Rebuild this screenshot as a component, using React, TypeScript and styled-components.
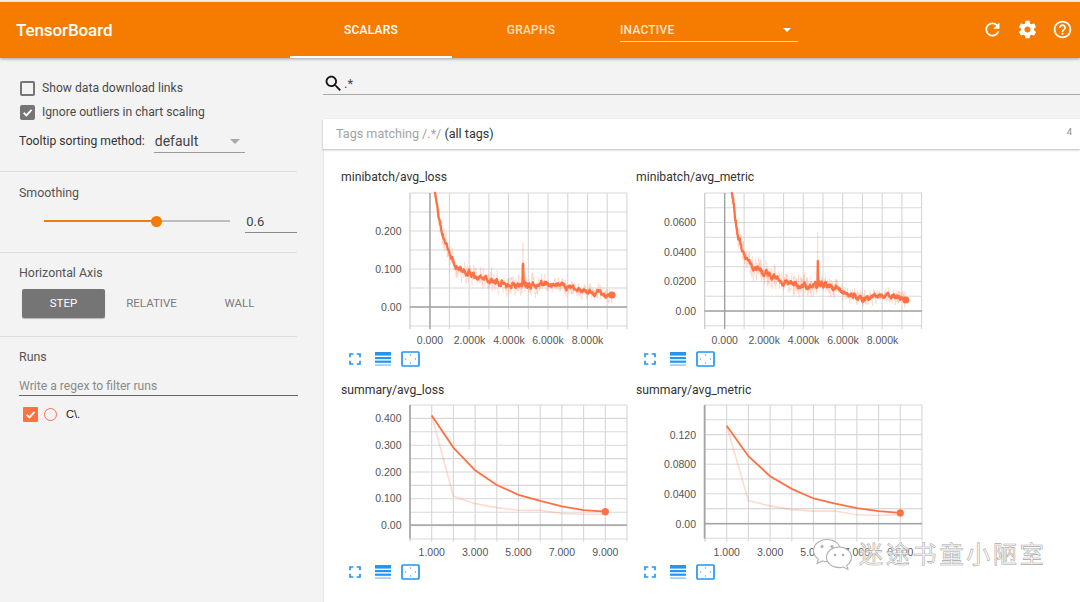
import React from 'react';
import styled, { createGlobalStyle } from 'styled-components';

const Global = createGlobalStyle`
  html, body { margin: 0; padding: 0; background: #f3f3f3; overflow: hidden; }
  body { font-family: Roboto, "Liberation Sans", sans-serif; }
`;

const Page = styled.div`
  position: relative;
  width: 1080px;
  height: 602px;
  padding-top: 2px;
  box-sizing: border-box;
  overflow: hidden;
  background: #f3f3f3;
  display: flex;
  flex-direction: column;
`;
const TopBar = styled.header`
  flex: none;
  height: 56px;
  background: #f57c00;
  box-shadow: 0 1px 3px rgba(0, 0, 0, 0.35);
  display: flex;
  align-items: stretch;
  color: #fff;
  position: relative;
  z-index: 2;
`;
const Brand = styled.div`
  width: 290px;
  padding-left: 16px;
  box-sizing: border-box;
  font-size: 17px;
  font-weight: 500;
  letter-spacing: -0.1px;
  line-height: 56px;
`;
const Tab = styled.div<{ $active?: boolean; $w: number }>`
  width: ${p => p.$w}px;
  box-sizing: border-box;
  text-align: center;
  font-size: 12px;
  font-weight: 500;
  letter-spacing: 0.2px;
  line-height: 56px;
  color: ${p => (p.$active ? '#fff' : 'rgba(255,255,255,0.76)')};
  border-bottom: 2px solid ${p => (p.$active ? '#fff' : 'transparent')};
`;
const RunSelect = styled.div`
  margin-left: 10px;
  width: 178px;
  height: 40px;
  box-sizing: border-box;
  border-bottom: 1px solid rgba(255, 255, 255, 0.7);
  font-size: 12px;
  font-weight: 500;
  letter-spacing: 0.2px;
  line-height: 56px;
  color: rgba(255, 255, 255, 0.82);
  display: flex;
  justify-content: space-between;
  align-items: flex-start;
  overflow: hidden;
  padding-right: 7px;
`;
const HeadCaret = styled.span`
  margin-top: 26px;
  width: 0;
  height: 0;
  border-left: 4px solid transparent;
  border-right: 4px solid transparent;
  border-top: 4px solid #fff;
`;
const HeadIcons = styled.div`
  margin-left: auto;
  display: flex;
  align-items: center;
  margin-top: -1px;
`;
const HeadButton = styled.span`
  width: 35px;
  display: flex;
  justify-content: center;
  svg { width: 21px; height: 21px; fill: #fff; display: block; }
`;

const Body = styled.div`
  flex: 1;
  display: flex;
  min-height: 0;
`;
const Sidebar = styled.aside`
  width: 323px;
  flex: none;
  box-sizing: border-box;
  padding-right: 26px;
  color: #444;
`;
const Section = styled.section<{ $h: number; $last?: boolean }>`
  height: ${p => p.$h}px;
  box-sizing: border-box;
  padding-left: 19px;
  border-bottom: ${p => (p.$last ? '0' : '1px solid #dcdcdc')};
`;
const SectionTop = styled(Section)`
  padding-top: 18px;
`;
const CheckRow = styled.div`
  height: 24px;
  display: flex;
  align-items: center;
  font-size: 12.15px;
  color: #4a4a4a;
`;
const Check = styled.span<{ $on?: boolean }>`
  width: 15px;
  height: 15px;
  box-sizing: border-box;
  margin: 0 7px 0 1px;
  border-radius: 2px;
  border: 2px solid #757575;
  background: ${p => (p.$on ? '#757575' : 'transparent')};
  display: flex;
  align-items: center;
  justify-content: center;
  svg { width: 13px; height: 13px; flex: none; }
`;
const TooltipRow = styled.div`
  margin-top: 3px;
  display: flex;
  align-items: center;
  font-size: 12.15px;
  color: #333;
  height: 28px;
`;
const TooltipSelect = styled.div`
  margin-left: 9px;
  width: 91px;
  height: 23px;
  box-sizing: border-box;
  border-bottom: 1px solid #9a9a9a;
  padding: 0 5px 0 1px;
  display: flex;
  align-items: center;
  justify-content: space-between;
  font-size: 14px;
  color: #444;
`;
const GrayCaret = styled.span`
  width: 0;
  height: 0;
  margin-top: 2px;
  border-left: 5px solid transparent;
  border-right: 5px solid transparent;
  border-top: 5px solid #a8a8a8;
`;
const SectionLabel = styled.div`
  font-size: 12.4px;
  line-height: 16px;
  color: #555;
`;
const SmoothSection = styled(Section)`
  padding-top: 13px;
`;
const SliderRow = styled.div`
  margin-top: 8px;
  display: flex;
  align-items: center;
`;
const Slider = styled.div`
  position: relative;
  margin-left: 25px;
  width: 187px;
  height: 2px;
  background: #bdbdbd;
`;
const SliderFill = styled.div`
  width: 112px;
  height: 2px;
  background: #f57c00;
`;
const SliderKnob = styled.div`
  position: absolute;
  left: 107px;
  top: -4px;
  width: 11px;
  height: 11px;
  border-radius: 50%;
  background: #f57c00;
`;
const SliderValue = styled.div`
  margin-left: 15px;
  width: 52px;
  height: 24px;
  box-sizing: border-box;
  border-bottom: 1px solid #8a8a8a;
  padding-left: 1px;
  font-size: 13px;
  line-height: 26px;
  color: #444;
`;
const AxisSection = styled(Section)`
  padding-top: 12px;
`;
const AxisButtons = styled.div`
  margin: 8px 0 0 3px;
  display: flex;
`;
const AxisButton = styled.div<{ $active?: boolean }>`
  width: 83px;
  height: 29px;
  margin-right: 5px;
  border-radius: 2px;
  text-align: center;
  font-size: 11.5px;
  line-height: 29px;
  background: ${p => (p.$active ? '#757575' : 'transparent')};
  color: ${p => (p.$active ? '#fff' : '#7b7b7b')};
  box-shadow: ${p => (p.$active ? '0 1px 1px rgba(0,0,0,.25)' : 'none')};
`;
const RunsSection = styled(Section)`
  padding-top: 12px;
`;
const RunFilter = styled.div`
  margin: 7px -1px 0 0;
  height: 24px;
  box-sizing: border-box;
  border-bottom: 1px solid #666;
  font-size: 12.15px;
  line-height: 28px;
  color: #8a8a8a;
`;
const RunRow = styled.div`
  margin-top: 11px;
  padding-left: 4px;
  display: flex;
  align-items: center;
`;
const RunCheck = styled.span`
  width: 15px;
  height: 15px;
  background: #ff7043;
  border-radius: 1px;
  display: flex;
  align-items: center;
  justify-content: center;
  svg { width: 13px; height: 13px; }
`;
const RunDot = styled.span`
  width: 13px;
  height: 13px;
  box-sizing: border-box;
  border: 1.5px solid #ff7043;
  border-radius: 50%;
  margin-left: 6px;
`;
const RunName = styled.span`
  margin: -2px 0 0 9px;
  font-family: "Liberation Sans", sans-serif;
  font-size: 11px;
  color: #222;
`;

const Main = styled.main`
  flex: 1;
  min-width: 0;
  display: flex;
  flex-direction: column;
`;
const SearchRow = styled.div`
  height: 37px;
  flex: none;
  box-sizing: border-box;
  border-bottom: 1px solid #a8a8a8;
  display: flex;
  align-items: flex-end;
  svg { width: 21px; height: 21px; fill: #111; flex: none; }
`;
const SearchText = styled.span`
  font-size: 13px;
  color: #444;
  line-height: 18px;
  margin-bottom: 1px;
`;
const TagBar = styled.div`
  margin-top: 24px;
  height: 30px;
  flex: none;
  box-sizing: border-box;
  background: #fff;
  box-shadow: 0 1px 2px rgba(0, 0, 0, 0.28);
  padding: 0 8px 2px 13px;
  display: flex;
  align-items: center;
  justify-content: space-between;
  position: relative;
  font-size: 12.6px;
`;
const TagMuted = styled.span`
  color: #a3a3a3;
`;
const TagStrong = styled.span`
  color: #333;
`;
const TagCount = styled.span`
  font-size: 9.5px;
  color: #8f8f8f;
  margin-top: -3px;
`;
const ChartPane = styled.div`
  flex: 1;
  background: #fff;
  border-left: 1px solid #e6e6e6;
  box-sizing: border-box;
  padding: 20px 0 0 17px;
  display: grid;
  grid-template-columns: 295px 295px;
  grid-auto-rows: 213px;
`;
const Card = styled.div`
  display: flex;
  flex-direction: column;
`;
const CardTitle = styled.div`
  font-size: 12.2px;
  line-height: 17px;
  color: #333;
  height: 18px;
`;
const Plot = styled.svg`
  display: block;
  width: 295px;
  height: 163px;
  flex: none;
`;
const CardTools = styled.div`
  display: flex;
  align-items: center;
  padding-left: 4px;
  height: 18px;
  color: #2196f3;
  svg { display: block; flex: none; }
`;
const Gap = styled.span`
  width: 10px;
  flex: none;
`;
const Watermark = styled.div`
  position: absolute;
  left: 812px;
  top: 538px;
  display: flex;
  align-items: center;
  pointer-events: none;
`;
const WatermarkText = styled.span`
  margin: -3px 0 0 5px;
  font-family: "Noto Sans CJK SC", sans-serif;
  font-size: 24px;
  line-height: 30px;
  letter-spacing: 2.8px;
  color: rgba(255, 255, 255, 0.9);
  -webkit-text-stroke: 0.6px #a8a8a8;
  text-shadow: 0 0 3px #fff;
`;

const rng = (seed: number) => () => {
  seed |= 0; seed = (seed + 0x6d2b79f5) | 0;
  let t = Math.imul(seed ^ (seed >>> 15), 1 | seed);
  t = (t + Math.imul(t ^ (t >>> 7), 61 | t)) ^ t;
  return ((t ^ (t >>> 14)) >>> 0) / 4294967296;
};

type Cfg = {
  ox: number; oy: number;
  left: number; right: number; top: number; bottom: number;
  gridX: number[]; gridY: number[];
  axisX?: number; zeroY: number;
  xLabels: [number, string][]; yLabels: [number, string][]; labelY: number;
  smooth?: [number, number][]; raw?: [number, number][];
  key?: [number, number][]; seed?: number; spike?: [number, number, number];
};

const range = (a: number, step: number, n: number) => Array.from({ length: n }, (_, i) => a + step * i);

const interp = (k: [number, number][], x: number) => {
  for (let i = 1; i < k.length; i++) {
    if (x <= k[i][0]) {
      const t = (x - k[i - 1][0]) / (k[i][0] - k[i - 1][0]);
      return k[i - 1][1] + t * (k[i][1] - k[i - 1][1]);
    }
  }
  return k[k.length - 1][1];
};

const noisy = (c: Cfg) => {
  const r = rng(c.seed!);
  const k = c.key!;
  const s: string[] = [];
  const w: string[] = [];
  let ar = 0;
  const x0 = k[0][0];
  const x1 = k[k.length - 1][0];
  let last: [number, number] = [x1, k[k.length - 1][1]];
  for (let x = x0; x <= x1; x += 0.4) {
    const b = interp(k, x);
    const fade = x > x1 - 70 ? 0.75 : 1;
    ar = ar * 0.78 + (r() - 0.5) * 4.2 * fade;
    let yS = b + ar + (r() - 0.5) * 1.8;
    let yW = b + ar + (r() - 0.5) * 22 * fade;
    if (c.spike && Math.abs(x - c.spike[0]) < 0.3) {
      yS = c.spike[1];
      yW = c.spike[2];
    }
    if (x > x1 - 3) yS = k[k.length - 1][1];
    const px = x - c.ox;
    s.push(`${px.toFixed(1)},${(Math.max(yS, c.top) - c.oy).toFixed(1)}`);
    w.push(`${px.toFixed(1)},${(Math.max(yW, c.top) - c.oy).toFixed(1)}`);
    last = [px, yS - c.oy];
  }
  return { s: s.join(' '), w: w.join(' '), last };
};

const charts: (Cfg & { title: string })[] = [
  {
    title: 'minibatch/avg_loss', ox: 341, oy: 187, left: 410, right: 627, top: 193, bottom: 326,
    gridX: range(410, 19.72, 12), gridY: range(193, 19, 8), axisX: 430, zeroY: 307, labelY: 344,
    xLabels: [[430, '0.000'], [469.5, '2.000k'], [509, '4.000k'], [548, '6.000k'], [587.5, '8.000k']],
    yLabels: [[231, '0.200'], [269, '0.100'], [307, '0.00']],
    key: [[434, 185], [437, 205], [441, 228], [445, 240], [450, 255], [455, 265], [460, 268], [469, 272], [480, 277], [495, 283], [509, 284], [530, 285], [548, 284], [568, 285], [578, 290], [590, 293], [612, 295]],
    seed: 7, spike: [523, 264, 243],
  },
  {
    title: 'minibatch/avg_metric', ox: 636, oy: 187, left: 704.5, right: 922, top: 193, bottom: 326,
    gridX: range(704.7, 19.72, 12), gridY: range(193, 14.75, 10), axisX: 724.7, zeroY: 311, labelY: 344,
    xLabels: [[724.7, '0.000'], [764.2, '2.000k'], [803.6, '4.000k'], [843, '6.000k'], [882.5, '8.000k']],
    yLabels: [[222, '0.0600'], [252, '0.0400'], [281.6, '0.0200'], [311, '0.00']],
    key: [[731, 185], [734, 207], [738, 240], [743, 252], [749, 264], [756, 270], [768, 274], [785, 281], [805, 286], [825, 285], [836, 287], [845, 294], [855, 296], [866, 298], [880, 296], [900, 297], [906, 300]],
    seed: 19, spike: [817.7, 261, 232],
  },
  {
    title: 'summary/avg_loss', ox: 341, oy: 400, left: 410, right: 627, top: 405, bottom: 538.5,
    gridX: range(410, 21.7, 11), gridY: range(405, 13.4, 11), zeroY: 525, labelY: 556,
    xLabels: [[431.7, '1.000'], [475.1, '3.000'], [518.5, '5.000'], [561.9, '7.000'], [605.3, '9.000']],
    yLabels: [[418, '0.400'], [445, '0.300'], [472, '0.200'], [498.5, '0.100'], [525, '0.00']],
    smooth: [0.41, 0.29, 0.205, 0.15, 0.113, 0.09, 0.07, 0.056, 0.05].map((v, i) => [431.7 + 21.7 * i, 525 - v * 267]),
    raw: [0.41, 0.108, 0.08, 0.065, 0.055, 0.055, 0.043, 0.04, 0.04].map((v, i) => [431.7 + 21.7 * i, 525 - v * 267]),
  },
  {
    title: 'summary/avg_metric', ox: 636, oy: 400, left: 704.5, right: 922, top: 405, bottom: 538.5,
    gridX: range(705, 21.7, 11), gridY: range(405, 14.8, 10), zeroY: 523.7, labelY: 556,
    xLabels: [[726.7, '1.000'], [770.1, '3.000'], [813.5, '5.000'], [856.9, '7.000'], [900.3, '9.000']],
    yLabels: [[434.7, '0.120'], [464.3, '0.0800'], [494, '0.0400'], [523.7, '0.00']],
    smooth: [0.132, 0.091, 0.064, 0.047, 0.034, 0.027, 0.021, 0.017, 0.0145].map((v, i) => [726.7 + 21.7 * i, 523.7 - v * 742]),
    raw: [0.132, 0.031, 0.024, 0.019, 0.017, 0.017, 0.012, 0.011, 0.012].map((v, i) => [726.7 + 21.7 * i, 523.7 - v * 742]),
  },
];

const LINE = '#ff7043';

const Chart = ({ c }: { c: Cfg }) => {
  const { ox, oy } = c;
  const pts = (a: [number, number][]) => a.map(([x, y]) => `${x - ox},${y - oy}`).join(' ');
  const n = c.key ? noisy(c) : null;
  const end = n ? n.last : [c.smooth![8][0] - ox, c.smooth![8][1] - oy];
  return (
    <Plot viewBox="0 0 295 163">
      {c.gridY.map(y => (
        <line key={y} x1={c.left - ox} x2={c.right - ox} y1={y - oy} y2={y - oy} stroke="#d8d8d8" strokeWidth="1.1" />
      ))}
      {c.gridX.map((x, i) => (
        <line key={x} x1={x - ox} x2={x - ox} y1={c.top - oy} y2={c.bottom + 3 - oy} stroke={i === 0 ? '#c4c4c4' : '#d6d6d6'} strokeWidth="1.1" />
      ))}
      {c.axisX ? (
        <line x1={c.axisX - ox} x2={c.axisX - ox} y1={c.top - oy} y2={c.bottom + 3 - oy} stroke="#a3a3a3" strokeWidth="1.4" />
      ) : (
        <line x1={c.left - ox} x2={c.left - ox} y1={c.top - oy} y2={c.bottom - oy} stroke="#a3a3a3" strokeWidth="1.6" />
      )}
      <line x1={c.left - ox} x2={c.right - ox} y1={c.zeroY - oy} y2={c.zeroY - oy} stroke="#a3a3a3" strokeWidth="1.4" />
      {n ? (
        <>
          <polyline points={n.w} fill="none" stroke={LINE} strokeOpacity="0.16" strokeWidth="1" />
          <polyline points={n.s} fill="none" stroke={LINE} strokeWidth="2.3" strokeLinejoin="round" />
        </>
      ) : (
        <>
          <polyline points={pts(c.raw!)} fill="none" stroke={LINE} strokeOpacity="0.25" strokeWidth="1.6" />
          <polyline points={pts(c.smooth!)} fill="none" stroke={LINE} strokeWidth="1.8" />
        </>
      )}
      <circle cx={end[0]} cy={end[1]} r="3.6" fill={LINE} />
      {c.yLabels.map(([y, t]) => (
        <text key={t} x={c.left - 8.5 - ox} y={y + 3.8 - oy} textAnchor="end" fontFamily="Liberation Sans, sans-serif" fontSize="10.5" fill="#555">{t}</text>
      ))}
      {c.xLabels.map(([x, t]) => (
        <text key={t} x={x - ox} y={c.labelY - oy} textAnchor="middle" fontFamily="Liberation Sans, sans-serif" fontSize="10.5" fill="#555">{t}</text>
      ))}
    </Plot>
  );
};

const Tools = () => (
  <CardTools>
    <svg width="20" height="20" viewBox="0 0 24 24" fill="currentColor">
      <path d="M7 14H5v5h5v-2H7v-3zm-2-4h2V7h3V5H5v5zm12 7h-3v2h5v-5h-2v3zM14 7h3v3h2V5h-5v2z" />
    </svg>
    <Gap />
    <svg width="16" height="16" viewBox="0 0 16 16" fill="currentColor">
      <rect x="0" y="1" width="16" height="3.6" />
      <rect x="0" y="6" width="16" height="2.2" />
      <rect x="0" y="9.6" width="16" height="2.2" />
      <rect x="0" y="13.4" width="16" height="1.4" opacity="0.55" />
    </svg>
    <Gap />
    <svg width="19" height="16" viewBox="0 0 19 16" fill="none" stroke="currentColor">
      <rect x="1" y="1" width="17" height="14" rx="1" strokeWidth="1.7" />
      <path d="M9.5 3.4v1.2M9.5 11.4v1.2M4 8h1.2M13.8 8h1.2" strokeWidth="1.2" />
    </svg>
  </CardTools>
);

const CheckMark = () => (
  <svg viewBox="0 0 24 24" fill="none" stroke="#fff" strokeWidth="3.4">
    <path d="M5 12.5l5 5L19.5 7" />
  </svg>
);

export default function App() {
  return (
    <Page>
      <Global />
      <TopBar>
        <Brand>TensorBoard</Brand>
        <Tab $active $w={162}>SCALARS</Tab>
        <Tab $w={158}>GRAPHS</Tab>
        <RunSelect>
          INACTIVE
          <HeadCaret />
        </RunSelect>
        <HeadIcons>
          <HeadButton>
            <svg viewBox="0 0 24 24"><path d="M17.65 6.35C16.2 4.9 14.21 4 12 4c-4.42 0-7.99 3.58-7.99 8s3.57 8 7.99 8c3.73 0 6.84-2.55 7.73-6h-2.08c-.82 2.33-3.04 4-5.65 4-3.31 0-6-2.69-6-6s2.69-6 6-6c1.66 0 3.14.69 4.22 1.78L13 11h7V4l-2.35 2.35z" /></svg>
          </HeadButton>
          <HeadButton>
            <svg viewBox="0 0 24 24"><path d="M19.43 12.98c.04-.32.07-.64.07-.98s-.03-.66-.07-.98l2.11-1.65c.19-.15.24-.42.12-.64l-2-3.46c-.12-.22-.39-.3-.61-.22l-2.49 1c-.52-.4-1.08-.73-1.69-.98l-.38-2.65C14.46 2.18 14.25 2 14 2h-4c-.25 0-.46.18-.49.42l-.38 2.65c-.61.25-1.17.59-1.69.98l-2.49-1c-.23-.09-.49 0-.61.22l-2 3.46c-.13.22-.07.49.12.64l2.11 1.65c-.04.32-.07.65-.07.98s.03.66.07.98l-2.11 1.65c-.19.15-.24.42-.12.64l2 3.46c.12.22.39.3.61.22l2.49-1c.52.4 1.08.73 1.69.98l.38 2.65c.03.24.24.42.49.42h4c.25 0 .46-.18.49-.42l.38-2.65c.61-.25 1.17-.59 1.69-.98l2.49 1c.23.09.49 0 .61-.22l2-3.46c.12-.22.07-.49-.12-.64l-2.11-1.65zM12 15.5c-1.93 0-3.5-1.57-3.5-3.5s1.57-3.5 3.5-3.5 3.5 1.57 3.5 3.5-1.57 3.5-3.5 3.5z" /></svg>
          </HeadButton>
          <HeadButton>
            <svg viewBox="0 0 24 24"><path d="M11 18h2v-2h-2v2zm1-16C6.48 2 2 6.48 2 12s4.48 10 10 10 10-4.48 10-10S17.52 2 12 2zm0 18c-4.41 0-8-3.59-8-8s3.59-8 8-8 8 3.59 8 8-3.59 8-8 8zm0-14c-2.21 0-4 1.79-4 4h2c0-1.1.9-2 2-2s2 .9 2 2c0 2-3 1.75-3 5h2c0-2.25 3-2.5 3-5 0-2.21-1.79-4-4-4z" /></svg>
          </HeadButton>
        </HeadIcons>
      </TopBar>
      <Body>
        <Sidebar>
          <SectionTop $h={114}>
            <CheckRow><Check /> Show data download links</CheckRow>
            <CheckRow><Check $on><CheckMark /></Check> Ignore outliers in chart scaling</CheckRow>
            <TooltipRow>
              Tooltip sorting method:
              <TooltipSelect>default<GrayCaret /></TooltipSelect>
            </TooltipRow>
          </SectionTop>
          <SmoothSection $h={81}>
            <SectionLabel>Smoothing</SectionLabel>
            <SliderRow>
              <Slider><SliderFill /><SliderKnob /></Slider>
              <SliderValue>0.6</SliderValue>
            </SliderRow>
          </SmoothSection>
          <AxisSection $h={84}>
            <SectionLabel>Horizontal Axis</SectionLabel>
            <AxisButtons>
              <AxisButton $active>STEP</AxisButton>
              <AxisButton>RELATIVE</AxisButton>
              <AxisButton>WALL</AxisButton>
            </AxisButtons>
          </AxisSection>
          <RunsSection $h={150} $last>
            <SectionLabel>Runs</SectionLabel>
            <RunFilter>Write a regex to filter runs</RunFilter>
            <RunRow>
              <RunCheck><CheckMark /></RunCheck>
              <RunDot />
              <RunName>C\.</RunName>
            </RunRow>
          </RunsSection>
        </Sidebar>
        <Main>
          <SearchRow>
            <svg viewBox="0 0 24 24"><path d="M15.5 14h-.79l-.28-.27C15.41 12.59 16 11.11 16 9.5 16 5.91 13.09 3 9.5 3S3 5.91 3 9.5 5.91 16 9.5 16c1.61 0 3.09-.59 4.23-1.57l.27.28v.79l5 4.99L20.49 19l-4.99-5zm-6 0C7.01 14 5 11.99 5 9.5S7.01 5 9.5 5 14 7.01 14 9.5 11.99 14 9.5 14z" /></svg>
            <SearchText>.*</SearchText>
          </SearchRow>
          <TagBar>
            <span><TagMuted>Tags matching /.*/</TagMuted> <TagStrong>(all tags)</TagStrong></span>
            <TagCount>4</TagCount>
          </TagBar>
          <ChartPane>
            {charts.map(c => (
              <Card key={c.title}>
                <CardTitle>{c.title}</CardTitle>
                <Chart c={c} />
                <Tools />
              </Card>
            ))}
          </ChartPane>
        </Main>
      </Body>
      <Watermark>
        <svg width="42" height="32" viewBox="0 0 42 32" fill="#fff" stroke="#b0b0b0" strokeWidth="1.1">
          <path d="M15 1.5C7.5 1.5 1.5 6.4 1.5 12.5c0 3.5 2 6.5 5 8.6L5 25.5l5.2-2.6c1.6.5 3.2.7 4.8.7 7.5 0 13.5-4.9 13.5-11.1S22.5 1.5 15 1.5z" />
          <path d="M27 9c-7 0-12.5 4.6-12.5 10.3S20 29.6 27 29.6c1.5 0 2.9-.2 4.2-.6l4.8 2.4-1.3-4c2.9-1.9 4.8-4.9 4.8-8.1C39.5 13.6 34 9 27 9z" />
          <circle cx="10" cy="8.5" r="1.6" fill="#b0b0b0" stroke="none" />
          <circle cx="20" cy="8.5" r="1.6" fill="#b0b0b0" stroke="none" />
          <circle cx="23" cy="17" r="1.3" fill="#b0b0b0" stroke="none" />
          <circle cx="31" cy="17" r="1.3" fill="#b0b0b0" stroke="none" />
        </svg>
        <WatermarkText>迷途书童小陋室</WatermarkText>
      </Watermark>
    </Page>
  );
}
